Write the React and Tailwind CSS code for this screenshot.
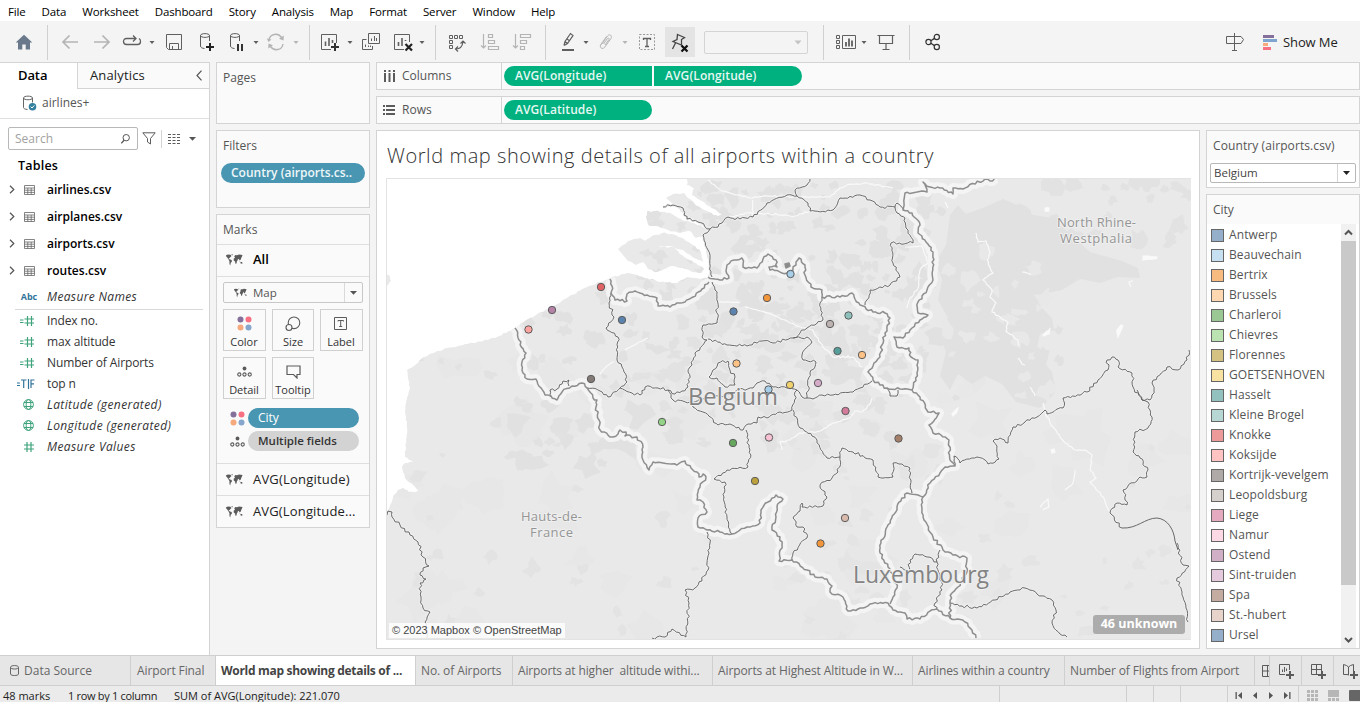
import React from "react";

/* ---------- geometry helpers for the map ---------- */
function rng(seed) {
  let s = seed;
  return () => {
    s = (s * 1664525 + 1013904223) % 4294967296;
    return s / 4294967296;
  };
}

function parse(str) {
  return str.trim().split(/\s+/).map((p) => p.split(",").map(Number));
}

/* Breaks each segment into short steps pushed sideways, so that borders look surveyed. */
function rough(str, amp = 1.5, seed = 7) {
  const pts = parse(str);
  const rand = rng(seed + pts.length * 31);
  const out = [pts[0]];
  for (let i = 1; i < pts.length; i++) {
    const [x0, y0] = pts[i - 1];
    const [x1, y1] = pts[i];
    const dx = x1 - x0;
    const dy = y1 - y0;
    const len = Math.hypot(dx, dy) || 1;
    const n = Math.max(1, Math.round(len / 2.6));
    for (let k = 1; k < n; k++) {
      const t = k / n;
      const o = (rand() - 0.5) * 2 * amp;
      out.push([x0 + dx * t - (dy / len) * o, y0 + dy * t + (dx / len) * o]);
    }
    out.push([x1, y1]);
  }
  return "M" + out.map(([x, y]) => x.toFixed(1) + " " + y.toFixed(1)).join("L");
}

function patches(x0, y0, x1, y1, count, rMin, rMax, seed) {
  const rand = rng(seed);
  let d = "";
  for (let i = 0; i < count; i++) {
    const cx = x0 + rand() * (x1 - x0);
    const cy = y0 + rand() * (y1 - y0);
    const r = rMin + rand() * (rMax - rMin);
    const sq = 0.5 + rand() * 0.7;
    const pts = [];
    for (let k = 0; k < 11; k++) {
      const a = (k / 11) * Math.PI * 2;
      const rr = r * (0.45 + rand() * 0.85);
      pts.push((cx + Math.cos(a) * rr).toFixed(1) + " " + (cy + Math.sin(a) * rr * sq).toFixed(1));
    }
    d += "M" + pts.join("L") + "Z";
  }
  return d;
}

const LAND =
  "386,514 390,505 394,495 398,490 403,488 409,492 418,491 411,483 405,478 402,467 405,463 413,462 405,457 406,440 407,427 405,412 406,403 410,387 408,378 407,370 414,366 423,357 447,348 473,343 497,337 515,328 530,318 550,308 567,298 587,287 610,278 627,273 647,278 660,282 677,283 687,277 700,279 708,278 710,268 706,252 703,236 709,230 704,226 714,218 722,214 712,208 700,200 692,195 694,188 687,185 688,177 1192,177 1192,641 385,641";
const ISLANDS = [
  "618,249 628,241 640,238 650,242 660,247 673,247 682,255 692,261 704,269 701,273 692,272 683,268 673,266 664,269 657,272 648,269 643,262 636,265 628,261",
  "646,216 655,211 665,212 672,214 681,219 690,222 700,225 707,230 703,236 696,238 690,231 680,233 668,230 656,226 648,225",
  "666,198 673,194 683,193 690,199 697,206 707,211 718,217 712,223 703,226 693,219 683,213 673,204",
  "645,241 652,236 662,233 672,234 684,239 693,245 701,252 703,262 694,258 683,250 670,246 657,246",
  "647,211 651,212 652,217 647,219",
  "385,274 390,276 391,281 388,285 385,286",
];

const NATIONAL = [
  "515,328 519,340 526,353 522,362 523,373 527,379 536,379 545,395 551,396 557,400 562,392 572,386 582,383 587,388 593,398 597,400 596,407 599,420 600,430 610,437 618,434 620,430 626,432 625,436 637,437 643,447 643,460 649,470 653,462 663,463 677,465 685,461 691,468 697,472 699,477 703,474 706,477 700,487 697,500 703,502 707,512 698,518 698,527 707,530 720,532 732,534 747,527 760,523 761,510 768,502 776,495 783,499 777,507 776,517 772,530 780,537 782,545 779,561 792,560 807,570 815,577 827,579 832,586 830,592 843,597 848,611 863,608 870,604 888,603 893,610 905,613 907,619 920,619 930,611 937,609 950,618 965,622 972,630 976,638",
  "890,604 893,597 897,588 893,577 888,567 880,553 881,543 887,527 897,507 907,493 918,495 923,497 922,510 924,520 933,537 943,550 953,555 967,558 967,572 958,587 952,593 950,603 950,618",
  "923,497 930,483 940,473 945,467 955,466 950,460 949,440 941,435 933,433 929,425 939,413 928,412 920,397 912,390 900,389 887,388 880,385 873,380 868,372 873,366 880,357 882,345 885,333 890,318 885,313 873,312 860,305 852,293 840,297 822,297 822,290 811,287 805,275 805,265 799,258 796,262 793,270 787,273 770,270 769,267 777,267 776,260 768,254 763,259 757,268 743,267 742,258 734,260 727,265 726,271 729,278 720,280 708,277",
  "709,282 702,289 693,297 680,303 670,307 658,306 657,298 647,295 640,293 635,291 627,294 627,301 615,300 611,293 612,286 610,279",
  "912,390 917,373 918,360 911,357 909,348 897,347 894,337 903,338 910,330 920,320 928,315 918,313 918,302 927,290 933,280 933,252 926,242 918,233 920,225 912,213 903,210 904,203 905,193 917,192 927,192 923,182 930,187 940,188 953,194 953,188 963,189 985,179 990,181 997,178",
];

const PROVINCES = [
  "611,293 609,303 614,317 606,328 618,337 617,360 622,367 627,382 620,388 608,397 600,391 587,388",
  "620,388 632,393 640,395 645,387 658,388 668,390 675,394 682,391 688,387 690,367 695,353 707,340 702,337 703,325 717,323 717,297 715,290 712,282",
  "551,397 550,390 557,389 562,384 563,381 569,380 569,386",
  "708,339 727,345 747,346 762,341 773,343 793,338 800,333 807,328 823,320 820,303 822,297",
  "793,338 807,337 812,342 802,355 803,360 816,362 810,373 807,398 813,399 822,395 833,395 853,392 860,388 872,381",
  "668,390 673,400 690,402 705,398 720,397 737,390 753,388 757,383 765,381 773,387 787,388 797,390 802,397 807,398",
  "718,363 728,361 730,370 735,377 735,385 725,387 717,378 709,377 713,370 718,363",
  "690,400 693,407 703,412 718,425 730,424 743,430 748,424 757,423 758,417 767,418 780,412 792,410 797,390",
  "793,410 800,428 812,436 817,440 827,458 840,457 842,448 853,452 873,460 878,477 893,477 893,463 902,464 910,468 911,480 912,493",
  "840,457 838,472 832,478 820,485 827,497 823,506 802,507 802,503 800,511 793,518 797,527 803,527 807,538 793,553 792,560",
  "746,430 750,450 748,467 727,470 714,479 725,482 724,497 727,517 732,534",
  "707,532 710,543 707,563 708,570 695,588 685,590 689,603 686,637 672,629 665,637 652,638",
  "387,515 388,511 392,512 392,517 400,525 410,535 418,542 423,557 429,566 423,568 420,575 426,579 420,583 421,597 423,608 430,612 425,622 427,638",
  "900,567 908,572 910,560 915,554 927,557 937,562 940,550",
  "937,562 940,577 942,590 935,603 936,610",
  "950,603 962,606 977,608 995,600 1010,592 1025,588 1037,594 1052,600 1056,610 1052,623 1060,634 1067,637",
  "955,466 954,456 960,463 977,457 985,460 988,464 999,459 997,446 993,441 1000,438 1008,443 1013,427 1025,422 1037,417 1045,410 1047,414 1063,408 1063,398 1087,392 1098,380 1108,370 1107,360 1112,357 1118,360 1118,367 1132,373 1133,387 1142,400 1150,400 1154,390 1152,383 1167,367 1178,370 1187,360 1189,350",
  "1137,390 1142,400 1148,402 1150,410 1152,417 1148,428 1135,432 1133,452 1140,458 1148,470 1147,477 1140,477 1123,490 1127,505 1117,503 1110,513 1122,528",
  "1177,543 1183,565 1189,566 1177,578 1183,597 1186,608 1188,622",
  "663,207 673,205 683,208 687,219 698,222 710,229 718,227 728,217 740,219 753,217 767,203 787,195 797,196 808,203 810,211 833,210 840,198 860,195 870,200 880,207 895,207 897,213 905,218 906,228 913,243 891,243 893,263 900,277 890,285 870,290 865,305",
  "710,229 703,235 708,250 712,277",
  "797,196 795,190 807,185 810,179",
  "895,207 897,203 904,210",
  "887,388 890,396 897,396 898,390",
];
const SMOOTH = ["M1122 528C1137 529 1145 518 1157 518C1168 519 1174 530 1175 541L1178 550"];

const RIVERS = [
  "976,233 978,242 986,241 990,253 987,260 993,273 983,280 992,290 990,297 996,303 992,312 1000,317 1008,322 1006,331 1018,340 1019,346",
  "1043,403 1047,417 1053,427 1065,443 1075,450 1085,450 1092,455 1090,470 1096,478 1090,482 1103,497 1110,512",
  "745,307 773,315 800,327 813,330 823,347 833,357 853,357 862,367",
  "872,398 870,404 862,412 855,411 850,418 833,423 820,431 800,433 790,440 780,442 782,450",
  "708,180 720,190 737,195 750,198 770,196 800,197 830,197 840,188 847,185 867,183 893,188",
  "753,217 753,200",
  "728,217 748,213 770,214 795,216 810,211",
  "600,374 607,366 614,362",
  "625,350 635,345 648,338",
  "907,308 909,300 918,288 920,270 928,262 922,246 905,247",
  "1075,470 1073,483 1065,490",
  "1018,358 1022,364 1025,365",
  "1030,387 1035,396",
  "945,202 948,208",
  "719,302 740,303",
  "1022,272 1027,273 1031,275",
  "1131,287 1129,282 1133,281",
  "1040,507 1048,499 1049,507 1043,510",
];
const LAKES = ["1143,256 1157,257 1156,259 1143,260", "1118,337 1117,330 1121,325 1123,326", "1043,335 1050,329 1049,334 1044,336", "1045,208 1049,208 1049,211 1045,211", "952,414 958,408 957,412 953,416", "1051,450 1054,449 1055,452 1052,453"];

const MARKS = [
  [601, 287, "#e15759"], [552, 310, "#b07aa1"], [528.5, 329.5, "#ff9d9a"], [622, 320, "#4e79a7"],
  [591, 379, "#79706e"], [790.5, 274, "#a0cbe8"], [767, 298, "#f28e2b"], [733.5, 311.5, "#4e79a7"],
  [830, 324, "#bab0ac"], [848.5, 315.5, "#86bcb6"], [837.5, 351, "#499894"], [862, 355, "#ffbe7d"],
  [736.5, 363.5, "#ffbe7d"], [768.5, 389.5, "#a0cbe8"], [790, 385, "#f1ce63"], [818, 383, "#d4a6c8"],
  [845.5, 411, "#d37295"], [662, 422, "#8cd17d"], [733, 443, "#59a14f"], [769, 437.5, "#fabfd2"],
  [898.5, 438.5, "#9d7660"], [755, 481, "#b6992d"], [845, 518, "#d7b5a6"], [820.5, 543.5, "#f28e2b"],
];

function MapView() {
  return (
    <svg className="block h-[462px] w-[805px]" viewBox="386 178 805 462">
      <defs>
        <clipPath id="land">
          <path d={rough(LAND, 0.7) + "Z"} />
          {ISLANDS.map((d) => <path key={d} d={rough(d, 0.7) + "Z"} />)}
        </clipPath>
      </defs>
      <rect x="386" y="178" width="805" height="462" fill="#fff" />
      <g clipPath="url(#land)">
        <rect x="386" y="178" width="805" height="462" fill="#e9e9e9" />
        <path d={patches(390, 340, 1190, 640, 60, 10, 26, 5)} fill="#e6e6e6" fillOpacity="0.7" />
        <path d={patches(700, 185, 930, 380, 190, 3, 11, 11)} fill="#e1e1e1" />
        <path d={patches(520, 290, 700, 400, 36, 3, 11, 23)} fill="#e1e1e1" />
        <path d={patches(640, 320, 900, 450, 90, 3, 11, 37)} fill="#e2e2e2" />
        <path d={patches(500, 400, 640, 465, 24, 5, 14, 41)} fill="#e1e1e1" />
        <path d={patches(400, 340, 560, 460, 10, 3, 8, 43)} fill="#e2e2e2" />
        <path d={patches(1040, 180, 1190, 260, 26, 4, 11, 53)} fill="#e2e2e2" />
        <path d="M950 215L958 205L966 214L985 207L1003 199L1020 206L1028 214L1052 218L1068 232L1090 252L1122 261L1138 268L1140 278L1118 277L1100 283L1080 279L1062 290L1048 293L1040 306L1052 318L1054 330L1040 334L1036 352L1052 372L1056 392L1040 408L1016 402L1002 384L985 376L972 384L958 374L950 390L940 376L946 352L940 336L948 318L938 300L942 280L936 262L946 245Z" fill="#e1e1e1" />
        <path d={patches(935, 210, 1060, 400, 40, 4, 12, 61)} fill="#e1e1e1" />
        <path d={patches(940, 250, 1050, 400, 26, 4, 11, 67)} fill="#e8e8e8" />
        <path d={patches(400, 470, 700, 640, 20, 3, 10, 71)} fill="#e3e3e3" />
        <path d={patches(760, 440, 1190, 640, 46, 3, 11, 83)} fill="#e4e4e4" />
        <path d={patches(640, 180, 720, 300, 24, 4, 10, 97)} fill="#e1e1e1" />
      </g>
      <g fill="none" stroke="#f9f9f9" strokeWidth="1.2">
        {RIVERS.map((d) => <path key={d} d={rough(d, 0.8)} />)}
        {LAKES.map((d) => <path key={d} d={rough(d, 0.6) + "Z"} fill="#fafafa" />)}
      </g>
      <g fill="none" stroke="#f4f4f4" strokeWidth="10" strokeLinejoin="round">
        {NATIONAL.map((d) => <path key={d} d={rough(d, 1.3)} />)}
      </g>
      <g fill="none" stroke="#f0f0f0" strokeWidth="2.6" strokeLinejoin="round">
        {PROVINCES.map((d) => <path key={d} d={rough(d, 1.5)} />)}
      </g>
      <g fill="none" stroke="#5a5a5a" strokeWidth="0.9" strokeLinejoin="round">
        {PROVINCES.map((d) => <path key={d} d={rough(d, 1.5)} />)}
        {SMOOTH.map((d) => <path key={d} d={d} />)}
      </g>
      <g fill="none" stroke="#8e8e8e" strokeWidth="1.5" strokeLinejoin="round">
        {NATIONAL.map((d) => <path key={d} d={rough(d, 1.3)} />)}
        <path d="M785 264l4 -1l1 3l-4 2z" fill="#8a8a8a" />
      </g>
      <g fontFamily="'Open Sans', 'Noto Sans', sans-serif" paintOrder="stroke" stroke="#efefef" strokeWidth="2" strokeLinejoin="round">
        <g fontSize="24" fill="#838383">
          <text x="688" y="405" textLength="90" lengthAdjust="spacingAndGlyphs">Belgium</text>
          <text x="853" y="583" textLength="136" lengthAdjust="spacingAndGlyphs">Luxembourg</text>
        </g>
        <g fontSize="13" fill="#959595">
          <text x="1057" y="227" textLength="79">North Rhine-</text>
          <text x="1060" y="243" textLength="72">Westphalia</text>
          <text x="521" y="521" textLength="61">Hauts-de-</text>
          <text x="530" y="537" textLength="43">France</text>
        </g>
      </g>
      {MARKS.map(([x, y, c]) => (
        <circle key={x + "-" + y} cx={x} cy={y} r="3.700" fill={c} fillOpacity="0.92" stroke="#5c5c5c" strokeWidth="1" />
      ))}
      <path d="M386.500 178V640M386 178.500H1191M386 639.500H1191" stroke="#e3e3e3" fill="none" />
    </svg>
  );
}

/* ---------- icons ---------- */
const Svg = ({ w = 22, h = 22, children, color = "#5f5f5f" }) => (
  <svg width={w} height={h} viewBox={`0 0 ${w} ${h}`} fill="none" stroke={color} strokeWidth="1" className="block shrink-0">{children}</svg>
);
const Caret = ({ color = "#5f5f5f" }) => (
  <svg width="8" height="5" viewBox="0 0 8 5" className="block shrink-0"><path d="M1.500 1H6.500L4 4z" fill={color} /></svg>
);
const BigCaret = () => (
  <svg width="9" height="6" viewBox="0 0 9 6" className="block shrink-0"><path d="M1 1H8L4.500 4.800z" fill="#555" /></svg>
);
const Plus = ({ x, y }) => <path d={`M${x - 4} ${y}H${x + 4}M${x} ${y - 4}V${y + 4}`} stroke="#333" strokeWidth="2" />;
const Dots = ({ s = 15 }) => (
  <svg width={s} height={s} viewBox="0 0 15 15" className="block shrink-0">
    <circle cx="3.500" cy="3.500" r="3" fill="#85709b" /><circle cx="11.500" cy="3.500" r="3" fill="#fa7083" />
    <circle cx="3.500" cy="11.500" r="3" fill="#f5a97c" /><circle cx="11.500" cy="11.500" r="3" fill="#86a6cd" />
  </svg>
);
const Detail = () => (
  <svg width="15" height="11" viewBox="0 0 15 11" className="block shrink-0" fill="none" stroke="#5b5b5b" strokeWidth="1.1">
    <circle cx="7.500" cy="2.500" r="1.900" fill="#5b5b5b" stroke="none" /><circle cx="2.300" cy="8.500" r="1.600" /><circle cx="7.500" cy="8.500" r="1.600" /><circle cx="12.700" cy="8.500" r="1.600" />
  </svg>
);
const World = ({ w = 17, h = 12 }) => (
  <svg width={w} height={h} viewBox="0 0 17 12" className="block shrink-0" fill="#5b5b5b">
    <path d="M0 1.200L2 .6L4.500 .8L5.500 2L4.200 3.200L3.400 4.300L2.600 4L3.400 5.200L5.600 6L6 7.300L4.700 9L4.200 11.500L3.500 10L3.400 7L2.300 5L1 3.200L.2 2.400zM5.200 .4L7 .3L6.300 1.500z" />
    <path d="M8.200 2.200L9.500 1L11 1.200L13 .5L16.500 1L16 2.400L15.300 3.800L14.800 5.500L13.600 6.600L13 5.200L12 4.800L11.700 6.200L10.900 7.200L10.600 9.200L9.600 10L9 7.500L7.600 6.300L7.800 4.500L9 3.700zM14.400 8L16.200 8L16.400 9.800L14.600 9.400zM13.500 7L14.500 7.500L13.800 7.800z" />
  </svg>
);
const Cell = ({ className, children }) => <div className={"flex shrink-0 items-center justify-center " + className}>{children}</div>;
const Sep = () => <div className="h-[35px] w-px shrink-0 bg-[#d0d0d0]" />;

const DbShape = ({ c }) => (
  <path d="M4.500 4.500C4.500 2 13.500 2 13.500 4.500C13.500 7 4.500 7 4.500 4.500V15C4.500 16.500 6 17.200 8.500 17.500M13.500 4.500V10" stroke={c} />
);

function Toolbar() {
  const g = "#b4b4b4";
  return (
    <div className="flex h-[41px] shrink-0 items-center pt-px">
      <Cell className="w-[47px]">
        <svg width="18" height="17" viewBox="0 0 18 17"><path d="M9 .8L17.300 8.500H15V15.500H10.700V10.500H7.300V15.500H3V8.500H.7z" fill="#69788a" /></svg>
      </Cell>
      <Sep />
      <Cell className="ml-1 w-9"><Svg w={18} color={g}><path d="M17 11H2M8.500 4.500L2 11L8.500 17.500" strokeWidth="1.700" /></Svg></Cell>
      <Cell className="w-7"><Svg w={18} color={g}><path d="M1 11H16M9.500 4.500L16 11L9.500 17.500" strokeWidth="1.700" /></Svg></Cell>
      <Cell className="w-8"><Svg w={20}><path d="M13.500 7.500H4.500C.5 7.500 .5 13.500 4.500 13.500H15.500C19.500 13.500 19 8.500 17 7.500M11 4.500L14 7.500L11 10.500" strokeWidth="1.300" /></Svg></Cell>
      <Caret />
      <Cell className="w-9"><Svg w={18}><path d="M1.500 3.500H16.500V18.500H3.500L1.500 16.500zM4.500 18.500V12.500H13.500V18.500M7.500 18V15" /></Svg></Cell>
      <Cell className="w-7"><Svg w={20}><DbShape c="#5b5b5b" /><path d="M10 16H18M14 12V20" stroke="#222" strokeWidth="2" /></Svg></Cell>
      <Cell className="w-8"><Svg w={20}><DbShape c="#5b5b5b" /><path d="M12 13V20M16 13V20" stroke="#333" strokeWidth="2" /></Svg></Cell>
      <Caret />
      <Cell className="w-8"><Svg w={20} color={g}><path d="M3 9C4 2.500 12 1.500 15.500 6.500M17 13C16 19.500 8 20.500 4.500 15.500" strokeWidth="1.400" /><path d="M17.800 4.500L17.500 9.500L13 7.800zM2.200 17.500L2.500 12.500L7 14.200zM.8 7.500L5.500 8.500L2.500 11z" fill={g} stroke="none" /></Svg></Cell>
      <Caret color={g} />
      <div className="w-[9px] shrink-0" />
      <Sep />
      <Cell className="ml-1 w-8"><Svg w={20}><path d="M11 18.500H1.500V3.500H16.500V12" /><path d="M5.500 15V10.500M9 15V7M12.500 12V9" strokeWidth="1.600" /><Plus x={15} y={16} /></Svg></Cell>
      <Caret />
      <Cell className="w-[34px]"><Svg w={20}><path d="M7.500 2.500H18.500V12.500H7.500zM10.500 10V7.500M13.500 10V5M15.500 10V7M11.500 15V18.500H1.500V8.500H5.500M4.500 16V13.500M7.500 16V14.500M9.500 16V14.500" /></Svg></Cell>
      <Cell className="w-[30px]"><Svg w={20}><path d="M11 18.500H1.500V3.500H16.500V11" /><path d="M5.500 15V11M9 15V7M12.500 10V9" strokeWidth="1.600" /><path d="M12.500 13L19 19.500M19 13L12.500 19.500" stroke="#222" strokeWidth="2.200" /></Svg></Cell>
      <Caret />
      <div className="w-[9px] shrink-0" />
      <Sep />
      <Cell className="w-[42px]"><Svg w={20}><path d="M2.500 4.500H5.500V7.500H2.500zM7.500 4.500H10.500V7.500H7.500zM12.500 4.500H15.500V7.500H12.500zM2.500 9.500H5.500V12.500H2.500zM2.500 14.500H5.500V17.500H2.500z" /><path d="M9 18C13 18 15.500 15 16 10.500M11 15.500L8.500 18L11 20.500M13.500 12.500L16 10L18.500 12.500" strokeWidth="1.200" /></Svg></Cell>
      <Cell className="w-6"><Svg w={20} color={g}><path d="M3.500 3V17M1 14.500L3.500 17L6 14.500M8.500 3.500H12.500V6.500H8.500zM8.500 9.500H14.500V12.500H8.500zM8.500 15.500H18.500V18.500H8.500z" strokeWidth="1.200" /></Svg></Cell>
      <Cell className="w-10"><Svg w={20} color={g}><path d="M3.500 3V17M1 14.500L3.500 17L6 14.500M8.500 3.500H18.500V6.500H8.500zM8.500 9.500H14.500V12.500H8.500zM8.500 15.500H12.500V18.500H8.500z" strokeWidth="1.200" /></Svg></Cell>
      <div className="w-[3px] shrink-0" />
      <Sep />
      <Cell className="ml-2 w-7"><Svg w={20}><path d="M6 14.500L7 10.500L12.500 2.500L15 4.500L9.500 12.500L6 14.500M7 10.500L9.500 12.500M9 8L11.500 9.800" strokeWidth="1.200" /><path d="M4 19H16" strokeWidth="2" /></Svg></Cell>
      <Caret />
      <Cell className="w-[31px]"><Svg w={20} color={g}><path d="M5.500 13.500L11.500 5C13.500 2.500 16.500 4.500 15 7.500L8.500 16.500C6.500 18.500 3.500 17 4.500 14L10.500 5.500M7.500 13L11.500 7.500C12.500 6.500 13.500 7.500 13 8.500L9 14" /></Svg></Cell>
      <Caret color={g} />
      <Cell className="w-9"><Svg w={20}><path d="M2.500 3.500H17.500V18.500H2.500z" strokeDasharray="2 1.500" stroke="#999" /><path d="M6.500 9V7.500H13.500V9M10 7.500V15.500M8 15.500H12" strokeWidth="1.300" /></Svg></Cell>
      <Cell className="h-[30px] w-[30px] bg-[#e4e4e4]"><Svg w={24} color="#444"><path d="M9.500 3.500L16.500 6.500L13.500 8.500L13.500 14L5 10.500L9 8.500zM7.500 12L4.500 18" strokeWidth="1.300" /><path d="M13.500 14.500L19.500 20.500M19.500 14.500L13.500 20.500" stroke="#111" strokeWidth="2.300" /></Svg></Cell>
      <div className="ml-[9px] flex h-[23px] w-[104px] shrink-0 items-center justify-end rounded-[2px] border border-[#d4d4d4] pr-[5px]"><BigCaretLight /></div>
      <div className="w-[15px] shrink-0" />
      <Sep />
      <Cell className="ml-2 w-7"><Svg w={22}><path d="M1.500 4.500H4.500V7.500H1.500zM1.500 9.500H4.500V12.500H1.500zM1.500 14.500H4.500V17.500H1.500zM7.500 4.500H20.500V17.500H7.500z" /><path d="M11 15.500V11M14 15.500V7.500M17 15.500V9.500" strokeWidth="1.800" /></Svg></Cell>
      <Caret />
      <Cell className="w-9"><Svg w={18}><path d="M.5 4.500H17.500M2.500 4.500V12.500H15.500V4.500M9 12.500V18.500M5.500 18.500H12.500" strokeWidth="1.200" /></Svg></Cell>
      <div className="w-[5px] shrink-0" />
      <Sep />
      <Cell className="w-[45px]"><Svg w={18} color="#333"><circle cx="4.500" cy="11" r="2.600" strokeWidth="1.200" /><circle cx="12.800" cy="6" r="2.600" strokeWidth="1.200" /><circle cx="12.800" cy="16" r="2.600" strokeWidth="1.200" /><path d="M6.800 9.700L10.500 7.400M6.800 12.300L10.500 14.600" strokeWidth="1.300" /></Svg></Cell>
      <div className="flex-1" />
      <Svg w={20}><path d="M9.500 2V19.500M7 19.500H12M1.500 5.500H16L18.500 8.500L16 12.500H1.500z" fill="#f4f4f4" /></Svg>
      <svg width="14" height="15" viewBox="0 0 14 15" className="ml-[18px] block">
        <path d="M0 0H11V3H0z" fill="#85709b" /><path d="M0 4H14V7H0z" fill="#7fa4cf" /><path d="M0 8H5V11H0z" fill="#f5a97c" /><path d="M0 12H8V15H0z" fill="#fa7083" />
      </svg>
      <span className="ml-1.5 w-[77px] text-[13px] leading-[15px] tracking-[-0.1px] text-[#222]">Show Me</span>
    </div>
  );
}
const BigCaretLight = () => <svg width="8" height="5" viewBox="0 0 8 5"><path d="M.5 .5H7.500L4 4.500z" fill="#c4c4c4" /></svg>;

/* ---------- data pane ---------- */
const FieldIcon = ({ type }) => {
  const gr = "#3fa37c";
  if (type === "abc") return <span className="text-[9px] font-bold text-[#33749a]">Abc</span>;
  if (type === "tf") return (
    <svg width="18" height="10" viewBox="0 0 18 10" fill="none" stroke="#33749a" strokeWidth="1.200" className="-ml-[5px]">
      <path d="M0 4H3M0 6.500H3M4 1H9.500M6.700 1V9M11.500 0V10M14 9V1H17.500M14 4.800H17" />
    </svg>
  );
  if (type === "globe")
    return <svg width="11" height="11" viewBox="0 0 11 11" fill="none" stroke={gr}><circle cx="5.500" cy="5.500" r="4.900" /><ellipse cx="5.500" cy="5.500" rx="2.300" ry="4.900" /><path d="M1 3.500H10M1 7.500H10" /></svg>;
  return (
    <svg width={16} height="10" viewBox="0 0 16 10" fill="none" stroke={gr} strokeWidth="1.200" className={type === "hash" ? "" : "-ml-[3px]"}>
      {type === "calc" && <path d="M1 4H4.500M1 6.500H4.500" />}
      {type === "calc" ? <path d="M5.500 3H15M5.500 7H15M8.500 0V10M12.500 0V10" /> : <path d="M3 3H13M3 7H13M6 0V10M10 0V10" />}
    </svg>
  );
};

const FIELDS = [
  ["calc", "Index no.", false], ["calc", "max altitude", false], ["calc", "Number of Airports", false], ["tf", "top n", false],
  ["globe", "Latitude (generated)", true], ["globe", "Longitude (generated)", true], ["hash", "Measure Values", true],
];

function DataPane() {
  return (
    <div className="flex w-[210px] shrink-0 flex-col border-r border-t border-[#d4d4d4] bg-white">
      <div className="flex h-[26px] shrink-0">
        <div className="w-[77px] pl-[18px] text-[13px] leading-[25px] font-semibold tracking-[-0.1px] text-black">Data</div>
        <div className="flex flex-1 items-center justify-between border-b border-l border-[#d4d4d4] bg-[#fafafa] pr-[7px] pl-3 text-[13px] tracking-[0.15px] text-[#222]">
          Analytics
          <svg width="6" height="11" viewBox="0 0 6 11" fill="none" stroke="#555" strokeWidth="1.200"><path d="M5.500 .7L1 5.500L5.500 10.300" /></svg>
        </div>
      </div>
      <div className="flex h-[30px] shrink-0 items-center border-b border-[#e0e0e0] pb-px pl-[22px]">
        <svg width="15" height="16" viewBox="0 0 15 16" fill="none" stroke="#666"><path d="M1.500 3C1.500 .5 10.500 .5 10.500 3C10.500 5.300 1.500 5.300 1.500 3V12.500C1.500 13.500 3 14.300 5.500 14.500M10.500 3V7.500" /><circle cx="10.500" cy="11.700" r="3.800" fill="#33809f" stroke="none" /><path d="M8.700 11.700L10 13L12.300 10.400" stroke="#fff" /></svg>
        <span className="ml-[5px] text-[12px] text-[#555]">airlines+</span>
      </div>
      <div className="mt-2 flex h-[23px] shrink-0 items-center pl-2">
        <div className="flex h-[23px] w-[130px] items-center justify-between rounded-[2px] border border-[#b8b8b8] pr-[7px] pl-1.5 text-[12px] text-[#a2a2a2]">
          Search
          <svg width="9" height="10" viewBox="0 0 9 10" fill="none" stroke="#555" strokeWidth="1"><circle cx="5.200" cy="3.700" r="3.200" /><path d="M3 6.200L.3 9.300" strokeWidth="1.300" /></svg>
        </div>
        <svg width="14" height="13" viewBox="0 0 14 13" className="ml-1" fill="none" stroke="#5b5b5b" strokeWidth="1"><path d="M.8 .8H13.200L8.500 6.500V12L5.500 10V6.500z" /></svg>
        <div className="ml-[5px] h-[18px] w-px bg-[#d4d4d4]" />
        <svg width="12" height="10" viewBox="0 0 12 10" className="ml-1.5" stroke="#5b5b5b" strokeWidth="1"><path d="M0 .5H12M0 3.500H12M0 6.500H12M0 9.500H12" strokeDasharray="3 1.500" /></svg>
        <div className="ml-2"><BigCaret /></div>
      </div>
      <div className="mt-[6px] h-5 pl-[18px] text-[12.5px] leading-5 font-semibold tracking-[0.2px] text-black">Tables</div>
      <div className="flex flex-col">
        {["airlines.csv", "airplanes.csv", "airports.csv", "routes.csv"].map((t) => (
          <div key={t} className="flex h-[27px] items-center pl-[9px]">
            <svg width="6" height="9" viewBox="0 0 6 9" fill="none" stroke="#555" strokeWidth="1.200"><path d="M1 .8L4.800 4.500L1 8.200" /></svg>
            <svg width="11" height="10" viewBox="0 0 11 10" className="ml-[9px]" fill="none" stroke="#666"><path d="M.5 .5H10.500V9.500H.5zM.5 3H10.500M.5 5.200H10.500M.5 7.400H10.500M3.800 3V9.500M7.200 3V9.500" strokeWidth=".8" /></svg>
            <span className="ml-3 text-[12px] leading-4 font-semibold text-black">{t}</span>
          </div>
        ))}
      </div>
      <div className="flex h-[25px] items-center">
        <div className="flex w-[47px] shrink-0 justify-center pl-[11px]"><FieldIcon type="abc" /></div>
        <span className="text-[12px] tracking-[0.35px] text-[#333] italic">Measure Names</span>
      </div>
      <div className="mr-[6px] ml-[15px] h-px shrink-0 bg-[#d9d9d9]" />
      <div className="flex flex-col">
        {FIELDS.map(([type, label, it]) => (
          <div key={label} className="flex h-[21px] items-center">
            <div className="flex w-[47px] shrink-0 justify-center pl-[10px]"><FieldIcon type={type} /></div>
            <span className={it ? "text-[12px] tracking-[0.4px] text-[#333] italic" : "text-[12px] tracking-[-0.12px] text-[#333]"}>{label}</span>
          </div>
        ))}
      </div>
    </div>
  );
}

/* ---------- cards column ---------- */
const MarkButton = ({ label, icon, className }) => (
  <div className={"flex h-[42px] flex-col items-center justify-between border border-[#d0d0d0] bg-[#fafafa] pt-[5px] text-[11px] text-[#333] " + className}>
    <div className="flex h-[17px] items-center">{icon}</div>
    <span className="leading-4">{label}</span>
  </div>
);

function Cards() {
  const card = "border border-[#d4d4d4] bg-[#fafafa] text-[12px] text-[#555]";
  return (
    <div className="ml-1.5 flex w-[154px] shrink-0 flex-col gap-1.5">
      <div className={card + " h-[62px] px-1.5 pt-[7px] leading-4"}>Pages</div>
      <div className={card + " h-[78px] pt-[7px] leading-4"}>
        <div className="px-1.5">Filters</div>
        <div className="mt-[9px] ml-1 h-5 w-[144px] rounded-full bg-[#4996b2] pl-[10px] text-[12px] leading-5 font-semibold whitespace-nowrap text-[#eef6f9]">Country (airports.cs..</div>
      </div>
      <div className={card + " flex h-[314px] flex-col"}>
        <div className="h-[30px] shrink-0 border-b border-[#dedede] px-1.5 leading-[30px]">Marks</div>
        <div className="flex h-8 shrink-0 items-center border-b border-[#dedede] pb-px pl-[9px] text-[13px] font-semibold text-black"><World /><span className="ml-[10px]">All</span></div>
        <div className="mt-[5px] ml-1.5 flex h-[21px] w-[140px] shrink-0 items-center rounded-[2px] border border-[#c8c8c8] pl-[10px] text-[11.5px]">
          <World w={13} h={10} /><span className="ml-[6px] flex-1">Map</span>
          <div className="flex h-full w-[18px] items-center justify-center border-l border-[#dadada]"><BigCaret /></div>
        </div>
        <div className="mt-1.5 ml-1.5 flex shrink-0 gap-1.5">
          <MarkButton className="w-[43px] pr-px" label="Color" icon={<Dots />} />
          <MarkButton className="w-[42px]" label="Size" icon={<svg width="16" height="16" viewBox="0 0 16 16" fill="#fafafa" stroke="#5b5b5b" strokeWidth="1.100"><circle cx="9" cy="6.800" r="5.800" /><circle cx="4" cy="11.500" r="3" /></svg>} />
          <MarkButton className="w-[43px] pr-px" label="Label" icon={<svg width="14" height="13" viewBox="0 0 14 13" fill="none" stroke="#5b5b5b"><path d="M.5 .5H12.500V12.500H.5zM4 4.500V3.500H9.500V4.500M6.700 3.500V9.500M5.200 9.500H8.200" /></svg>} />
        </div>
        <div className="mt-1.5 ml-1.5 flex shrink-0 gap-1.5">
          <MarkButton className="w-[43px] pr-px" label="Detail" icon={<Detail />} />
          <MarkButton className="w-[42px]" label="Tooltip" icon={<svg width="15" height="14" viewBox="0 0 15 14" fill="none" stroke="#5b5b5b" strokeWidth="1.200"><path d="M1 1H14V9.500H11V13L7.500 9.500H1z" /></svg>} />
        </div>
        <div className="mt-[9px] flex h-5 shrink-0 items-center pl-[13px]"><Dots /><div className="ml-[3px] h-5 w-[111px] rounded-full bg-[#4996b2] pl-2.5 leading-5 font-medium text-white">City</div></div>
        <div className="mt-[3px] flex h-5 shrink-0 items-center pl-[13px]"><Detail /><div className="ml-[3px] h-5 w-[111px] rounded-full bg-[#d3d3d3] pl-2.5 text-[11.5px] leading-5 font-semibold text-[#333]">Multiple fields</div></div>
        <div className="mt-[12px] flex h-[33px] shrink-0 items-center border-y border-[#dedede] pl-[9px] text-[13px] tracking-[0.2px] text-[#222]"><World /><span className="ml-[10px]">AVG(Longitude)</span></div>
        <div className="flex h-[31px] shrink-0 items-center pl-[9px] text-[13px] tracking-[0.15px] text-[#222]"><World /><span className="ml-[10px]">AVG(Longitude...</span></div>
      </div>
    </div>
  );
}

/* ---------- legend ---------- */
const LEGEND = [
  ["Antwerp", "bg-[#95aeca]"], ["Beauvechain", "bg-[#c6e0f1]"], ["Bertrix", "bg-[#f7bb80]"], ["Brussels", "bg-[#ffd8b1]"],
  ["Charleroi", "bg-[#9bc795]"], ["Chievres", "bg-[#bae3b1]"], ["Florennes", "bg-[#d3c281]"], ["GOETSENHOVEN", "bg-[#f7e2a1]"],
  ["Hasselt", "bg-[#92c1bf]"], ["Kleine Brogel", "bg-[#b6d7d3]"], ["Knokke", "bg-[#ed9a9b]"], ["Koksijde", "bg-[#ffc4c2]"],
  ["Kortrijk-vevelgem", "bg-[#afa9a8]"], ["Leopoldsburg", "bg-[#d6d0cd]"], ["Liege", "bg-[#e5aabf]"], ["Namur", "bg-[#fcd9e4]"],
  ["Ostend", "bg-[#d0afc7]"], ["Sint-truiden", "bg-[#e5cade]"], ["Spa", "bg-[#c4ada0]"], ["St.-hubert", "bg-[#e7d3ca]"], ["Ursel", "bg-[#95aeca]"],
];

function RightColumn() {
  return (
    <div className="flex w-[154px] shrink-0 flex-col gap-1.5 text-[12px] text-[#555]">
      <div className="h-[58px] shrink-0 border border-[#d4d4d4] bg-white">
        <div className="h-[29px] bg-[#fafafa] px-1.5 leading-[30px] tracking-[0.1px]">Country (airports.csv)</div>
        <div className="mt-[3px] ml-[3px] flex h-[20px] w-[146px] items-center rounded-[2px] border border-[#b8b8b8] pl-[3px] text-[11.5px] text-[#444]">
          <span className="flex-1">Belgium</span>
          <div className="flex h-full w-[18px] items-center justify-center border-l border-[#d4d4d4]"><svg width="7" height="4" viewBox="0 0 7 4"><path d="M0 0H7L3.500 4z" fill="#222" /></svg></div>
        </div>
      </div>
      <div className="flex h-[455px] shrink-0 flex-col border border-[#d4d4d4] bg-white">
        <div className="h-[29px] shrink-0 bg-[#fafafa] px-1.5 leading-[30px]">City</div>
        <div className="flex min-h-0 flex-1">
          <div className="flex flex-1 flex-col pt-px pl-1">
            {LEGEND.map(([n, c]) => (
              <div key={n} className="flex h-5 items-center whitespace-nowrap">
                <div className={"h-[13px] w-[13px] shrink-0 border border-[#666] " + c} />
                <span className="ml-[5px] tracking-[0.12px]">{n}</span>
              </div>
            ))}
          </div>
          <div className="mr-[3px] flex w-[15px] shrink-0 flex-col items-center bg-[#f1f1f1]">
            <svg width="9" height="17" viewBox="0 0 9 17" fill="none" stroke="#555" strokeWidth="2"><path d="M1 10.500L4.500 7L8 10.500" /></svg>
            <div className="h-[344px] w-full bg-[#c9c9c9]" />
            <div className="flex-1" />
            <svg width="9" height="17" viewBox="0 0 9 17" fill="none" stroke="#555" strokeWidth="2"><path d="M1 7L4.500 10.500L8 7" /></svg>
          </div>
        </div>
      </div>
    </div>
  );
}

function Shelf({ label, icon, pills }) {
  return (
    <div className="flex h-7 shrink-0 items-center border border-[#d4d4d4] bg-[#fafafa]">
      <div className="flex h-full w-[125px] shrink-0 items-center border-r border-[#d4d4d4] pl-[6px] text-[12px] text-[#555]">
        {icon}<span className="ml-[7px]">{label}</span>
      </div>
      <div className="flex gap-[2px] pl-0.5">
        {pills.map(([t, shape], i) => (
          <div key={i} className={"h-5 w-[148px] bg-[#00b180] pl-[11px] text-[12px] leading-5 font-semibold tracking-[0.1px] text-[#e6f8f2] " + shape}>{t}</div>
        ))}
      </div>
    </div>
  );
}

const TABS = [
  ["Airport Final", "w-[85px] pl-[6px] tracking-[-0.1px]"], ["World map showing details of ...", "w-[200px] bg-white font-bold tracking-[-0.3px] text-[#444]"], ["No. of Airports", "w-[97px] tracking-[-0.1px]"],
  ["Airports at higher  altitude withi...", "w-[200px] tracking-[-0.14px]"], ["Airports at Highest Altitude in W...", "w-[200px] tracking-[-0.1px]"],
  ["Airlines within a country", "w-[152px] tracking-[-0.12px]"], ["Number of Flights from Airport", "w-[190px] tracking-[-0.12px]"],
];

function BottomTabs() {
  return (
    <div className="flex h-[31px] shrink-0 border-y border-[#cfcfcf] bg-[#e6e6e6] text-[12px] text-[#666]">
      <div className="flex w-[131px] shrink-0 items-center border-r border-[#cfcfcf] pl-[10px]">
        <svg width="9" height="11" viewBox="0 0 9 11" fill="none" stroke="#666"><path d="M.5 2.300C.5 0 8.500 0 8.500 2.300C8.500 4.600 .5 4.600 .5 2.300V9C.5 11 8.500 11 8.500 9V2.300" /></svg>
        <span className="ml-[5px]">Data Source</span>
      </div>
      {TABS.map(([t, c]) => (
        <div key={t} className={"shrink-0 overflow-hidden border-r border-[#cfcfcf] pl-[5px] leading-[29px] whitespace-pre " + c}>{t}</div>
      ))}
      <div className="flex w-[15px] shrink-0 items-center overflow-hidden border-r border-[#cfcfcf] pl-[7px]"><svg width="12" height="12" viewBox="0 0 12 12" className="shrink-0" fill="none" stroke="#5b5b5b"><path d="M.5 .5H11.500V11.500H.5zM.5 6H11.500M5.500 .5V11.500" /></svg></div>
      <Cell className="w-8 border-r border-[#cfcfcf]"><svg width="18" height="16" viewBox="0 0 18 16" fill="none" stroke="#5b5b5b"><path d="M8 11.500H2.500V1.500H12.500V7M5.500 9V6.500M7.500 9V4M9.500 8V5.500" /><path d="M9 12H17M13 8V16" strokeWidth="2" /></svg></Cell>
      <Cell className="w-8 border-r border-[#cfcfcf]"><svg width="18" height="16" viewBox="0 0 18 16" fill="none" stroke="#5b5b5b"><path d="M9 11.500H2.500V1.500H12.500V8M2.500 6.500H12.500M7.500 1.500V11.500" /><path d="M9 12H17M13 8V16" strokeWidth="2" /></svg></Cell>
      <Cell className="w-8"><svg width="18" height="16" viewBox="0 0 18 16" fill="none" stroke="#5b5b5b"><path d="M8 12L6 11.500H2.500V1.500L5.500 2.500L7.500 4L9.500 2.500L12.500 1.500V8M7.500 4V12" /><path d="M9 12H17M13 8V16" strokeWidth="2" /></svg></Cell>
    </div>
  );
}

function StatusBar() {
  const cell = "h-full shrink-0 border-l border-[#cfcfcf] ";
  return (
    <div className="flex h-4 shrink-0 items-center bg-[#ebebeb] text-[11px] whitespace-nowrap text-[#222]">
      <span className="w-[65px] shrink-0 pt-1 pl-[3px]">48 marks</span>
      <span className="w-[106px] shrink-0 pt-1 pl-[3px] tracking-[-0.3px]">1 row by 1 column</span>
      <span className="flex-1 pt-1 pl-[3px]">SUM of AVG(Longitude): 221.070</span>
      <div className={cell + "w-[127px]"} /><div className={cell + "w-[27px]"} /><div className={cell + "w-[27px]"} /><div className={cell + "w-[47px]"} />
      <div className={cell + "flex w-[71px] items-center gap-[8px] pt-[3px] pl-[7px]"}>
        <svg width="8" height="7" viewBox="0 0 8 7" fill="#555"><path d="M.5 0H1.800V7H.5zM7 0V7L3 3.500z" /></svg>
        <svg width="8" height="7" viewBox="0 0 8 7" fill="#555"><path d="M6 0V7L2 3.500z" /></svg>
        <svg width="8" height="7" viewBox="0 0 8 7" fill="#555"><path d="M2 0V7L6 3.500z" /></svg>
        <svg width="8" height="7" viewBox="0 0 8 7" fill="#555"><path d="M7.500 0H6.200V7H7.500zM1 0V7L5 3.500z" /></svg>
      </div>
      <div className={cell + "flex w-[62px] items-center gap-[10px] pt-[3px] pl-2"}>
        <svg width="11" height="11" viewBox="0 0 11 11" fill="#b6b6b6" className="shrink-0"><path d="M0 0h3v3H0zM4 0h3v3H4zM8 0h3v3H8zM0 4h3v3H0zM4 4h3v3H4zM8 4h3v3H8zM0 8h3v3H0zM4 8h3v3H4zM8 8h3v3H8z" /></svg>
        <svg width="11" height="11" viewBox="0 0 11 11" fill="#b6b6b6" className="shrink-0"><path d="M0 0h11v7H0zM0 8h3v3H0zM4 8h3v3H4zM8 8h3v3H8z" /></svg>
        <div className="h-[11px] w-[12px] shrink-0 rounded-[1px] bg-[#666]" />
      </div>
    </div>
  );
}

export default function App() {
  return (
    <div className="flex h-[702px] w-[1360px] flex-col overflow-hidden bg-[#f4f4f4] font-['Open_Sans','Noto_Sans',sans-serif]">
      <div className="flex h-[21px] shrink-0 items-center gap-4 bg-white pt-[3px] pl-2 text-[11.5px] tracking-[-0.15px] text-black">
        {["File", "Data", "Worksheet", "Dashboard", "Story", "Analysis", "Map", "Format", "Server", "Window", "Help"].map((m) => <span key={m}>{m}</span>)}
      </div>
      <Toolbar />
      <div className="flex h-[593px] shrink-0">
        <DataPane />
        <Cards />
        <div className="ml-1.5 flex w-[984px] shrink-0 flex-col gap-1.5">
          <Shelf label="Columns" pills={[["AVG(Longitude)", "rounded-l-full"], ["AVG(Longitude)", "rounded-r-full"]]} icon={<svg width="12" height="12" viewBox="0 0 12 12" stroke="#5b5b5b" strokeWidth="2"><path d="M2 0V12M6.500 0V12M11 0V12" strokeDasharray="2 1 20 0" /></svg>} />
          <Shelf label="Rows" pills={[["AVG(Latitude)", "rounded-full"]]} icon={<svg width="12" height="12" viewBox="0 0 12 12" stroke="#5b5b5b" strokeWidth="2"><path d="M0 2H12M0 6H12M0 10H12" strokeDasharray="2 1 20 0" /></svg>} />
          <div className="flex gap-1.5">
            <div className="h-[519px] w-[824px] shrink-0 border border-[#d4d4d4] bg-white pl-[9px]">
              <div className="h-[47px] pl-px text-[20px] leading-[50px] font-light tracking-[0.57px] whitespace-nowrap text-[#333]">World map showing details of all airports within a country</div>
              <div className="relative h-[462px] w-[805px]">
                <MapView />
                <div className="absolute bottom-[2px] left-[3px] h-[15px] w-[176px] bg-white/80 pl-[3px] font-['Liberation_Sans',sans-serif] text-[11px] leading-[15px] whitespace-nowrap text-[#444]">© 2023 Mapbox © OpenStreetMap</div>
                <div className="absolute right-[6px] bottom-[6px] h-[19px] w-[92px] rounded-[3px] bg-[#acacac] text-center text-[12.5px] leading-[18px] font-bold text-white">46 unknown</div>
              </div>
            </div>
            <RightColumn />
          </div>
        </div>
      </div>
      <BottomTabs />
      <StatusBar />
    </div>
  );
}
